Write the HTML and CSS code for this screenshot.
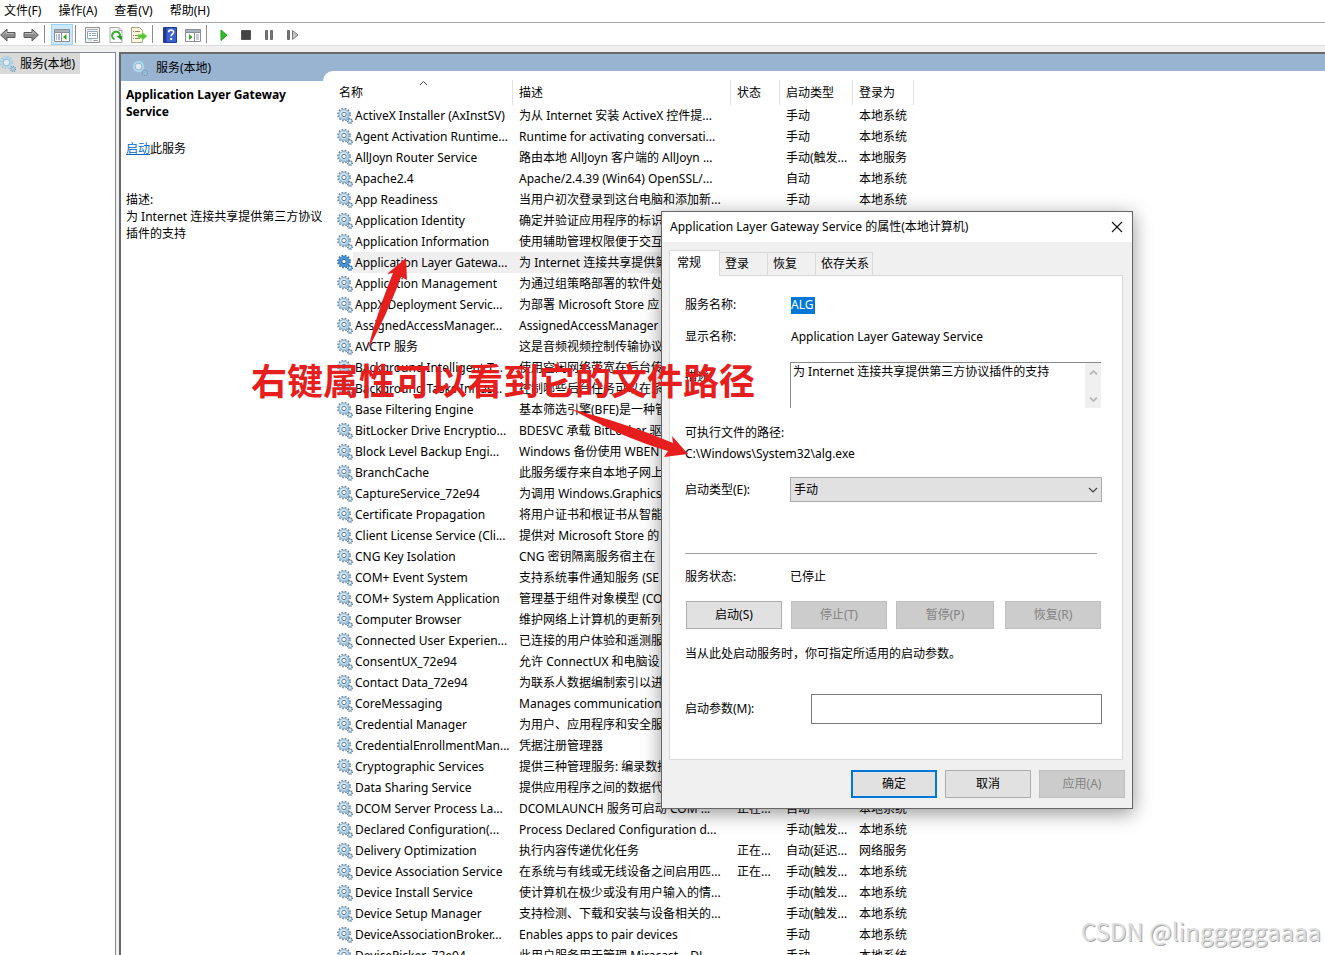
FILE: index.html
```html
<!DOCTYPE html>
<html lang="zh-CN">
<head>
<meta charset="utf-8">
<title>服务</title>
<link rel="stylesheet" href="styles.css">
</head>
<body>
<svg class="defs" aria-hidden="true">
  <symbol id="gear" viewBox="0 0 16 16">
    <circle cx="7" cy="6.500" r="6" fill="none" stroke="#6d8ba6" stroke-width="1.8" stroke-dasharray="1.6 1.542"/>
    <circle cx="7" cy="6.500" r="5.200" fill="#aacde5" stroke="#86a9c4" stroke-width=".8"/>
    <circle cx="6.600" cy="6" r="3.800" fill="#d3e7f4"/>
    <circle cx="7" cy="6.500" r="2.200" fill="#fff" stroke="#557c9f" stroke-width="1"/>
    <circle cx="13" cy="13" r="2.300" fill="#a9c8de" stroke="#5f7f9b" stroke-width="1.400" stroke-dasharray="1 .806"/>
    <circle cx="13" cy="13" r="1" fill="#e6f2fa"/>
  </symbol>
  <symbol id="gear-on" viewBox="0 0 16 16">
    <circle cx="7" cy="6.500" r="6" fill="none" stroke="#2c6fae" stroke-width="1.8" stroke-dasharray="1.6 1.542"/>
    <circle cx="7" cy="6.500" r="5.200" fill="#4b99d8" stroke="#2c74b5" stroke-width=".8"/>
    <circle cx="7" cy="6.500" r="2.200" fill="#fff" stroke="#1f5f9c" stroke-width="1"/>
    <circle cx="13" cy="13" r="2.300" fill="#5fa5dc" stroke="#2c6fae" stroke-width="1.400" stroke-dasharray="1 .806"/>
    <circle cx="13" cy="13" r="1" fill="#e6f2fa"/>
  </symbol>
  <symbol id="gear-soft" viewBox="0 0 16 16">
    <circle cx="6.500" cy="6.500" r="5.800" fill="none" stroke="#9dbdd2" stroke-width="1.400" stroke-dasharray="1.500 1.537"/>
    <circle cx="6.500" cy="6.500" r="4.500" fill="#dfeaf2" stroke="#b2d9ec" stroke-width="2"/>
    <circle cx="6.500" cy="6.500" r="3.400" fill="none" stroke="#7fa9c6" stroke-width=".8"/>
    <circle cx="13" cy="13" r="2.500" fill="none" stroke="#6f93ae" stroke-width="1.400" stroke-dasharray="1 .96"/>
    <circle cx="13" cy="13" r="1.500" fill="none" stroke="#93bdd6" stroke-width="1.300"/>
  </symbol>
</svg>

<nav class="menubar">
  <button>文件(F)</button><button>操作(A)</button><button>查看(V)</button><button>帮助(H)</button>
</nav>

<div class="toolbar" role="toolbar">
  <button aria-label="后退"><svg width="16" height="16" viewBox="0 0 16 16"><path d="M.6 8 7 2v3.500h8v5H7V14z" fill="#8c8c8c" stroke="#5c5c5c"/><path d="M3 7.600 6.500 4.500v2h7" fill="none" stroke="#b9b9b9"/></svg></button>
  <button aria-label="前进"><svg width="16" height="16" viewBox="0 0 16 16"><path d="M15.400 8 9 2v3.500H1v5h8V14z" fill="#8c8c8c" stroke="#5c5c5c"/><path d="M2 6.500h8v-2L13 7.600" fill="none" stroke="#b9b9b9"/></svg></button>
  <i class="sep"></i>
  <button class="on" aria-label="控制台树"><svg width="16" height="16" viewBox="0 0 16 16"><path d="M.5 2.500h15v12H.5z" fill="#fff" stroke="#8a9096"/><path d="M1 3h14v2H1z" fill="#a9b2bb"/><path d="M1 5.500h14M7.500 6v8" stroke="#8a9096"/><path d="M2 8h1m1 0h2M2 10h1m1 0h2M2 12h1m1 0h2" stroke="#4b79b5"/><path d="M12.500 7v6L9 10z" fill="#2fa51d"/></svg></button>
  <i class="sep"></i>
  <button aria-label="属性"><svg width="16" height="16" viewBox="0 0 16 16"><path d="M.5.500h14v15H.5z" fill="#f8f8f8" stroke="#8e8e8e"/><path d="M2.500 4.500h10v7h-10z" fill="#fff" stroke="#96a5b3"/><path d="M2 2.500h11" stroke="#a8a8a8"/><path d="M4 6.500h2m1 0h4M4 8.500h2m1 0h4" stroke="#8ba1b5"/><path d="M3 13h4" stroke="#8fcfe2" stroke-width="1"/><path d="M8.500 13.500h4" stroke="#9a9a9a"/></svg></button>
  <button aria-label="刷新"><svg width="16" height="16" viewBox="0 0 16 16"><path d="M2 .5h9l3 3v12H2z" fill="#fdfdfd" stroke="#aaa"/><path d="M11 .5v3h3" fill="#e4e4e4" stroke="#aaa"/><path d="M6.500 12.200A3.900 3.900 0 1 1 11.800 9.500" fill="none" stroke="#2faf2f" stroke-width="2.100"/><path d="M8.300 9h5.600v4.500z" fill="#1e9a24"/></svg></button>
  <button aria-label="导出列表"><svg width="18" height="16" viewBox="0 0 18 16"><path d="M1.500.500h8l3 3v12h-11z" fill="#fff8dd" stroke="#aaa38d"/><path d="M3 4.500h1m1 0h5M3 8.500h1m1 0h4M3 11.500h1m1 0h5" stroke="#8f7f68"/><path d="M8 7.500h4V5l5 4.200L12 13.500V11H8z" fill="#52c631" stroke="#9ada82" stroke-width=".6"/></svg></button>
  <i class="sep"></i>
  <button aria-label="帮助"><svg width="14" height="16" viewBox="0 0 14 16"><path d="M.5.500h13v15H.5z" fill="#3b62cf" stroke="#23398c"/><path d="M1 1h2.500v14H1z" fill="#223a93"/><path d="M5.600 5.300c0-3 5-3 5-.2 0 2-2.500 2-2.500 4.200" fill="none" stroke="#fff" stroke-width="1.600"/><path d="M7.200 11h1.900v2H7.200z" fill="#fff"/></svg></button>
  <button aria-label="操作窗格"><svg width="16" height="16" viewBox="0 0 16 16"><path d="M.5 2.500h15v12H.5z" fill="#fff" stroke="#8a9096"/><path d="M1 3h14v2H1z" fill="#a9b2bb"/><path d="M1 5.500h14M9.500 6v8" stroke="#8a9096"/><path d="M11 8h3m-3 2h3m-3 2h3" stroke="#8ba1b5"/><path d="M4 7v6l3.500-3z" fill="#2fa51d"/></svg></button>
  <i class="sep"></i>
  <button aria-label="启动"><svg width="16" height="16" viewBox="0 0 16 16"><path d="M5 3v10.500L11 8.200z" fill="#2fc02b" stroke="#1c9a1c"/></svg></button>
  <button aria-label="停止"><svg width="16" height="16" viewBox="0 0 16 16"><path d="M2.500 3.500h9v9h-9z" fill="#444" stroke="#555"/></svg></button>
  <button aria-label="暂停"><svg width="16" height="16" viewBox="0 0 16 16"><path d="M3.500 3.500h2v9h-2zM8.500 3.500h2v9h-2z" fill="#777" stroke="#6a6a6a"/></svg></button>
  <button aria-label="重新启动"><svg width="16" height="16" viewBox="0 0 16 16"><path d="M2.500 3.500h2v9h-2z" fill="#777" stroke="#6a6a6a"/><path d="M7.500 3.500v9L13 8z" fill="#c4c4c4" stroke="#7b7b7b"/></svg></button>
</div>

<div class="work">
  <aside class="tree"><span class="node"><svg width="16" height="16"><use href="#gear-soft"/></svg>服务(本地)</span></aside>
  <main class="pane">
    <section class="detail">
      <div class="band"><svg width="16" height="16"><use href="#gear-soft"/></svg>服务(本地)</div>
      <div class="info">
        <h2>Application Layer Gateway Service</h2>
        <p class="act"><a href="#">启动</a>此服务</p>
        <p>描述:<br>为 Internet 连接共享提供第三方协议插件的支持</p>
      </div>
    </section>
    <section class="listwrap">
      <div class="list">
        <table>
          <colgroup><col class="c-icon"><col class="c-name"><col class="c-desc"><col class="c-state"><col class="c-type"><col class="c-user"></colgroup>
          <thead><tr><th colspan="2" class="first">名称<svg class="sort" width="9" height="6" viewBox="0 0 9 6"><path d="M1 5l3.500-3.500L8 5" fill="none" stroke="#444"/></svg></th><th>描述</th><th>状态</th><th>启动类型</th><th>登录为</th></tr></thead>
          <tbody>
<tr><td><svg><use href="#gear"/></svg></td><td>ActiveX Installer (AxInstSV)</td><td>为从 Internet 安装 ActiveX 控件提...</td><td></td><td>手动</td><td>本地系统</td></tr>
<tr><td><svg><use href="#gear"/></svg></td><td>Agent Activation Runtime...</td><td>Runtime for activating conversati...</td><td></td><td>手动</td><td>本地系统</td></tr>
<tr><td><svg><use href="#gear"/></svg></td><td>AllJoyn Router Service</td><td>路由本地 AllJoyn 客户端的 AllJoyn ...</td><td></td><td>手动(触发...</td><td>本地服务</td></tr>
<tr><td><svg><use href="#gear"/></svg></td><td>Apache2.4</td><td>Apache/2.4.39 (Win64) OpenSSL/...</td><td></td><td>自动</td><td>本地系统</td></tr>
<tr><td><svg><use href="#gear"/></svg></td><td>App Readiness</td><td>当用户初次登录到这台电脑和添加新...</td><td></td><td>手动</td><td>本地系统</td></tr>
<tr><td><svg><use href="#gear"/></svg></td><td>Application Identity</td><td>确定并验证应用程序的标识</td><td></td><td></td><td></td></tr>
<tr><td><svg><use href="#gear"/></svg></td><td>Application Information</td><td>使用辅助管理权限便于交互</td><td></td><td></td><td></td></tr>
<tr class="selected"><td><svg><use href="#gear-on"/></svg></td><td>Application Layer Gatewa...</td><td>为 Internet 连接共享提供第</td><td></td><td></td><td></td></tr>
<tr><td><svg><use href="#gear"/></svg></td><td>Application Management</td><td>为通过组策略部署的软件处</td><td></td><td></td><td></td></tr>
<tr><td><svg><use href="#gear"/></svg></td><td>AppX Deployment Servic...</td><td>为部署 Microsoft Store 应</td><td></td><td></td><td></td></tr>
<tr><td><svg><use href="#gear"/></svg></td><td>AssignedAccessManager...</td><td>AssignedAccessManager</td><td></td><td></td><td></td></tr>
<tr><td><svg><use href="#gear"/></svg></td><td>AVCTP 服务</td><td>这是音频视频控制传输协议</td><td></td><td></td><td></td></tr>
<tr><td><svg><use href="#gear"/></svg></td><td>Background Intelligent T...</td><td>使用空闲网络带宽在后台传</td><td></td><td></td><td></td></tr>
<tr><td><svg><use href="#gear"/></svg></td><td>Background Tasks Infras...</td><td>控制哪些后台任务可以在系</td><td></td><td></td><td></td></tr>
<tr><td><svg><use href="#gear"/></svg></td><td>Base Filtering Engine</td><td>基本筛选引擎(BFE)是一种管</td><td></td><td></td><td></td></tr>
<tr><td><svg><use href="#gear"/></svg></td><td>BitLocker Drive Encryptio...</td><td>BDESVC 承载 BitLocker 驱</td><td></td><td></td><td></td></tr>
<tr><td><svg><use href="#gear"/></svg></td><td>Block Level Backup Engi...</td><td>Windows 备份使用 WBEN</td><td></td><td></td><td></td></tr>
<tr><td><svg><use href="#gear"/></svg></td><td>BranchCache</td><td>此服务缓存来自本地子网上</td><td></td><td></td><td></td></tr>
<tr><td><svg><use href="#gear"/></svg></td><td>CaptureService_72e94</td><td>为调用 Windows.Graphics</td><td></td><td></td><td></td></tr>
<tr><td><svg><use href="#gear"/></svg></td><td>Certificate Propagation</td><td>将用户证书和根证书从智能</td><td></td><td></td><td></td></tr>
<tr><td><svg><use href="#gear"/></svg></td><td>Client License Service (Cli...</td><td>提供对 Microsoft Store 的</td><td></td><td></td><td></td></tr>
<tr><td><svg><use href="#gear"/></svg></td><td>CNG Key Isolation</td><td>CNG 密钥隔离服务宿主在</td><td></td><td></td><td></td></tr>
<tr><td><svg><use href="#gear"/></svg></td><td>COM+ Event System</td><td>支持系统事件通知服务 (SE</td><td></td><td></td><td></td></tr>
<tr><td><svg><use href="#gear"/></svg></td><td>COM+ System Application</td><td>管理基于组件对象模型 (CO</td><td></td><td></td><td></td></tr>
<tr><td><svg><use href="#gear"/></svg></td><td>Computer Browser</td><td>维护网络上计算机的更新列</td><td></td><td></td><td></td></tr>
<tr><td><svg><use href="#gear"/></svg></td><td>Connected User Experien...</td><td>已连接的用户体验和遥测服</td><td></td><td></td><td></td></tr>
<tr><td><svg><use href="#gear"/></svg></td><td>ConsentUX_72e94</td><td>允许 ConnectUX 和电脑设</td><td></td><td></td><td></td></tr>
<tr><td><svg><use href="#gear"/></svg></td><td>Contact Data_72e94</td><td>为联系人数据编制索引以进</td><td></td><td></td><td></td></tr>
<tr><td><svg><use href="#gear"/></svg></td><td>CoreMessaging</td><td>Manages communication</td><td></td><td></td><td></td></tr>
<tr><td><svg><use href="#gear"/></svg></td><td>Credential Manager</td><td>为用户、应用程序和安全服</td><td></td><td></td><td></td></tr>
<tr><td><svg><use href="#gear"/></svg></td><td>CredentialEnrollmentMan...</td><td>凭据注册管理器</td><td></td><td></td><td></td></tr>
<tr><td><svg><use href="#gear"/></svg></td><td>Cryptographic Services</td><td>提供三种管理服务: 编录数据</td><td></td><td></td><td></td></tr>
<tr><td><svg><use href="#gear"/></svg></td><td>Data Sharing Service</td><td>提供应用程序之间的数据代</td><td></td><td></td><td></td></tr>
<tr><td><svg><use href="#gear"/></svg></td><td>DCOM Server Process La...</td><td>DCOMLAUNCH 服务可启动 COM ...</td><td>正在...</td><td>自动</td><td>本地系统</td></tr>
<tr><td><svg><use href="#gear"/></svg></td><td>Declared Configuration(...</td><td>Process Declared Configuration d...</td><td></td><td>手动(触发...</td><td>本地系统</td></tr>
<tr><td><svg><use href="#gear"/></svg></td><td>Delivery Optimization</td><td>执行内容传递优化任务</td><td>正在...</td><td>自动(延迟...</td><td>网络服务</td></tr>
<tr><td><svg><use href="#gear"/></svg></td><td>Device Association Service</td><td>在系统与有线或无线设备之间启用匹...</td><td>正在...</td><td>手动(触发...</td><td>本地系统</td></tr>
<tr><td><svg><use href="#gear"/></svg></td><td>Device Install Service</td><td>使计算机在极少或没有用户输入的情...</td><td></td><td>手动(触发...</td><td>本地系统</td></tr>
<tr><td><svg><use href="#gear"/></svg></td><td>Device Setup Manager</td><td>支持检测、下载和安装与设备相关的...</td><td></td><td>手动(触发...</td><td>本地系统</td></tr>
<tr><td><svg><use href="#gear"/></svg></td><td>DeviceAssociationBroker...</td><td>Enables apps to pair devices</td><td></td><td>手动</td><td>本地系统</td></tr>
<tr><td><svg><use href="#gear"/></svg></td><td>DevicePicker_72e94</td><td>此用户服务用于管理 Miracast、DL...</td><td></td><td>手动</td><td>本地系统</td></tr>
          </tbody>
        </table>
      </div>
    </section>
  </main>
</div>

<div class="dialog" role="dialog" aria-labelledby="dlg-title">
  <header class="titlebar"><span id="dlg-title">Application Layer Gateway Service 的属性(本地计算机)</span>
    <button class="close" aria-label="关闭"><svg width="12" height="12" viewBox="0 0 12 12"><path d="M1 1l10 10M11 1L1 11" stroke="#111" stroke-width="1.100"/></svg></button></header>
  <div class="tabs" role="tablist"><button class="active" role="tab">常规</button><button role="tab">登录</button><button role="tab">恢复</button><button role="tab">依存关系</button></div>
  <div class="sheet">
    <div class="field line"><label for="svc">服务名称:</label><input id="svc" class="picked" value="ALG" readonly></div>
    <div class="field line"><span>显示名称:</span><span class="val">Application Layer Gateway Service</span></div>
    <div class="field descr"><label for="desc">描述:</label>
      <div class="memo"><textarea id="desc" readonly>为 Internet 连接共享提供第三方协议插件的支持</textarea>
        <div class="scroll"><svg width="9" height="7" viewBox="0 0 9 7"><path d="M1 5.500 4.500 2 8 5.500" fill="none" stroke="#bbb" stroke-width="1.800"/></svg><svg width="9" height="7" viewBox="0 0 9 7"><path d="M1 1.500 4.500 5 8 1.500" fill="none" stroke="#bbb" stroke-width="1.800"/></svg></div></div></div>
    <div class="path"><span>可执行文件的路径:</span><span>C:\Windows\System32\alg.exe</span></div>
    <div class="field"><label for="type">启动类型(E):</label>
      <div class="combo"><select id="type"><option>手动</option></select><svg width="10" height="6" viewBox="0 0 10 6"><path d="M1 1l4 4 4-4" fill="none" stroke="#444" stroke-width="1.200"/></svg></div></div>
    <hr>
    <div class="field"><span>服务状态:</span><span>已停止</span></div>
    <div class="controls"><button>启动(S)</button><button disabled>停止(T)</button><button disabled>暂停(P)</button><button disabled>恢复(R)</button></div>
    <p class="hint">当从此处启动服务时，你可指定所适用的启动参数。</p>
    <div class="field params"><label for="args">启动参数(M):</label><input id="args" class="args"></div>
  </div>
  <footer class="actions"><button class="default">确定</button><button>取消</button><button disabled>应用(A)</button></footer>
</div>

<div class="note">右键属性可以看到它的文件路径</div>
<svg class="arrows" width="700" height="480" viewBox="0 0 700 480" aria-hidden="true"><path d="M406 258 407 280 401 277C391 304 380 327 368 349 374 325 382 300 393 273L387 274ZM571 409C606 418 640 429 673 443L672 436 688 454 664 457 668 451C633 441 602 426 571 409Z" fill="#e61e1e"/></svg>
<div class="watermark">CSDN @lingggggaaaa</div>
</body>
</html>
```

FILE: styles.css
```css
* { box-sizing: border-box; }
body {
  margin: 0;
  height: 100vh;
  display: flex;
  flex-direction: column;
  position: relative;
  overflow: hidden;
  background: #f0f0f0;
  color: #000;
  font: 12px/18px "Noto Sans", "Noto Sans CJK SC", sans-serif;
}
button, input, select, textarea { font: inherit; color: inherit; margin: 0; padding: 0; }
p, h2 { margin: 0; }
.defs { position: absolute; width: 0; height: 0; }

.menubar { display: flex; gap: 17px; height: 23px; padding: 2px 4px; background: #fff; border-bottom: 1px solid #a8a8a8; }
.menubar button { border: 0; background: none; }

.toolbar { display: flex; align-items: flex-end; gap: 1px; height: 23px; background: #fff; border-bottom: 1px solid #dcdcdc; }
.toolbar button { width: 22px; height: 21px; display: grid; place-items: center; border: 0; background: none; flex: none; }
.toolbar button:first-child { margin-left: -3px; }
.toolbar .on { background: #cce8ff; border: 1px solid #99d1ff; }
.sep { width: 1px; height: 18px; margin: 0 5px 2px 1px; background: #8d8d8d; }

.work { flex: 1; min-height: 0; display: flex; gap: 3px; padding-top: 6px; }
.tree { width: 116px; background: #fff; border: solid #828790; border-width: 1px 1px 0 0; }
.node { display: inline-flex; align-items: center; gap: 4px; height: 21px; padding-right: 5px; background: #d9d9d9; }
.pane { flex: 1; display: flex; min-width: 0; background: #fff; border: solid #696969; border-width: 2px 0 0 2px; overflow: hidden; }
.detail { width: 202px; flex: none; }
.band { display: flex; align-items: center; gap: 8px; height: 27px; padding-left: 11px; background: #99b4d1; }
.info { padding: 5px 0 0 5px; line-height: 17px; }
.info h2 { font-size: 12px; line-height: 17px; font-weight: 700; padding-right: 24px; }
.act { margin: 20px 0 34px; }
.act a { color: #0066cc; }

.listwrap { flex: 1; min-width: 0; padding-top: 17px; background: linear-gradient(#99b4d1 27px, #fff 27px); }
.list { background: #fff; border-top-left-radius: 10px; padding: 9px 0 0 14px; }
table { table-layout: fixed; border-collapse: separate; border-spacing: 0; width: 577px; }
.c-icon { width: 16px; }
.c-name { width: 160px; }
.c-desc { width: 218px; }
.c-state { width: 49px; }
.c-type { width: 73px; }
.c-user { width: 61px; }
th, td { padding: 0 0 0 6px; text-align: left; font-weight: 400; white-space: nowrap; overflow: hidden; }
th { height: 25px; position: relative; border-right: 1px solid #e2e2e2; }
th.first { padding-left: 2px; }
.sort { position: absolute; left: 82px; top: 0; }
td { height: 21px; }
td:nth-child(1) { padding: 0; }
td:nth-child(2) { padding-left: 2px; }
td svg { display: block; width: 16px; height: 16px; }
.selected td:nth-child(n+2) { background: #efefef; }

.dialog {
  position: absolute; left: 661px; top: 211px; width: 472px;
  background: #f0f0f0; border: 1px solid #666;
  box-shadow: 0 4px 18px rgba(0, 0, 0, .42);
}
.titlebar { display: flex; align-items: center; justify-content: space-between; height: 30px; padding: 0 9px 0 8px; background: #fff; }
.close { display: grid; border: 0; background: none; }
.tabs { display: flex; align-items: flex-end; padding: 8px 7px 0; }
.tabs button { height: 23px; padding: 0 18px 0 5px; border: 1px solid #d9d9d9; border-left: 0; border-bottom: 0; background: #f0f0f0; }
.tabs .active { height: 26px; width: 51px; padding: 0 0 2px 7px; margin-bottom: -1px; text-align: left; background: #fff; border-left: 1px solid #d9d9d9; position: relative; }
.tabs button:last-child { padding: 0 3px 0 5px; }
.sheet { margin: 0 9px 0 7px; padding: 13px 20px 35px 15px; background: #fff; border: 1px solid #d9d9d9; }
.field { display: flex; align-items: center; }
.field > :first-child { width: 105px; flex: none; }
.line { height: 32px; }
.val { padding-left: 1px; }
.picked { width: 24px; height: 17px; margin-left: 1px; border: 0; background: #0078d7; color: #fff; }
.descr { align-items: flex-start; margin-top: 9px; }
.descr label { padding-top: 6px; }
.memo { flex: 1; display: flex; height: 46px; margin-right: 1px; border: solid #8a8a8a; border-width: 1px 0 0 1px; }
.memo textarea { flex: 1; min-width: 0; padding-left: 2px; border: 0; resize: none; overflow: hidden; }
.scroll { width: 16px; display: flex; flex-direction: column; justify-content: space-between; align-items: center; padding: 6px 0 5px; background: #f0f0f0; }
.path { display: flex; flex-direction: column; gap: 3px; margin: 16px 0 14px; }
.combo { flex: 1; position: relative; }
.combo select { display: block; width: 100%; height: 25px; padding-left: 3px; appearance: none; background: #e1e1e1; border: 1px solid #adadad; border-radius: 0; }
.combo svg { position: absolute; right: 4px; top: 10px; pointer-events: none; }
hr { margin: 51px 5px 14px 0; border: 0; height: 1px; background: #a0a0a0; }
.controls { display: grid; grid-template-columns: 96fr 96fr 98fr 98fr; column-gap: 9px; margin: 15px 1px 16px; }
.controls button:last-child { margin-left: 2px; }
.controls button, .actions button { height: 28px; background: #e1e1e1; border: 1px solid #adadad; }
.controls button:disabled, .actions button:disabled { background: #ccc; border-color: #bfbfbf; color: #838383; }
.params { margin-top: 31px; }
.params > :first-child { width: 126px; }
.args { flex: 1; min-width: 0; height: 30px; border: 1px solid #7a7a7a; background: #fff; }
.actions { display: flex; justify-content: flex-end; gap: 8px; padding: 10px 7px; }
.actions button { width: 86px; }
.actions .default { border: 2px solid #0078d7; }

.note { position: absolute; left: 251px; top: 353px; color: #e61e1e; font: 700 36px/52px "Noto Sans CJK SC", sans-serif; white-space: nowrap; }
.arrows { position: absolute; left: 0; top: 0; pointer-events: none; }
.watermark { position: absolute; right: 4px; bottom: 7px; font: 24px/34px "Noto Sans CJK SC", sans-serif; color: #dedede; text-shadow: 1px 1px 0 #aaa; }
```
